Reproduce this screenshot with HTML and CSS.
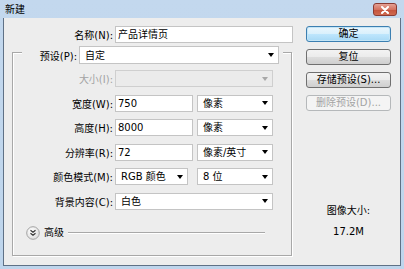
FILE: index.html
```html
<!DOCTYPE html>
<html lang="zh-CN">
<head>
  <meta charset="UTF-8" />
  <title>新建</title>
  <link rel="stylesheet" href="styles.css">
</head>
<body>
  <div class="window">
    <div class="titlebar">
      <span class="title">新建</span>
      <span class="close">
        <svg width="10" height="8" viewBox="0 0 10 8"><path d="M2 1 L8 7 M8 1 L2 7" stroke="#fff" stroke-width="2" stroke-linecap="round"/></svg>
      </span>
    </div>

    <div class="client">
      <div class="main">
        <div class="name-row">
          <span class="label name-label">名称(N):</span>
          <div class="field name-field">产品详情页</div>
        </div>

        <div class="group">
          <!-- preset sits on the top border like a legend -->
          <div class="preset-row">
            <span class="label preset-label">预设(P):</span>
            <div class="combo preset-combo"><span>自定</span><span class="arrow"></span></div>
          </div>

          <div class="rows">
            <div class="row">
              <span class="label disabled">大小(I):</span>
              <div class="combo wide off"><span></span><span class="arrow"></span></div>
            </div>
            <div class="row">
              <span class="label">宽度(W):</span>
              <div class="field num">750</div>
              <div class="combo unit"><span>像素</span><span class="arrow"></span></div>
            </div>
            <div class="row">
              <span class="label">高度(H):</span>
              <div class="field num">8000</div>
              <div class="combo unit"><span>像素</span><span class="arrow"></span></div>
            </div>
            <div class="row">
              <span class="label">分辨率(R):</span>
              <div class="field num">72</div>
              <div class="combo unit"><span>像素/英寸</span><span class="arrow"></span></div>
            </div>
            <div class="row">
              <span class="label">颜色模式(M):</span>
              <div class="combo mode"><span>RGB 颜色</span><span class="arrow"></span></div>
              <div class="combo unit bits"><span>8 位</span><span class="arrow"></span></div>
            </div>
            <div class="row">
              <span class="label">背景内容(C):</span>
              <div class="combo wide"><span>白色</span><span class="arrow"></span></div>
            </div>
          </div>

          <div class="advanced">
            <svg class="adv-icon" width="14" height="14" viewBox="0 0 14 14">
              <defs>
                <radialGradient id="knob" cx="0.4" cy="0.35" r="0.7">
                  <stop offset="0" stop-color="#ffffff"/>
                  <stop offset="1" stop-color="#dcdcdc"/>
                </radialGradient>
              </defs>
              <circle cx="7" cy="7" r="6.3" fill="url(#knob)" stroke="#a3a3a3"/>
              <path d="M4.5 4.3 L7 6.3 L9.5 4.3 M4.5 7.3 L7 9.3 L9.5 7.3" fill="none" stroke="#333" stroke-width="1.2"/>
            </svg>
            <span class="adv-text">高级</span>
            <span class="adv-line"></span>
          </div>
        </div>
      </div>

      <div class="side">
        <div class="btn default">确定</div>
        <div class="btn">复位</div>
        <div class="btn">存储预设(S)...</div>
        <div class="btn disabled">删除预设(D)...</div>

        <div class="info">
          <div>图像大小:</div>
          <div class="size">17.2M</div>
        </div>
      </div>
    </div>
  </div>
</body>
</html>
```

FILE: styles.css
```css
body {
  margin: 0;
  font-family: "DejaVu Sans", "Noto Sans CJK SC", sans-serif;
  font-size: 10px;
  color: #000;
}

.window {
  width: 404px;
  height: 269px;
  box-sizing: border-box;
  padding: 0 3px 3px;
  background: linear-gradient(#c3d8ee, #bed5ec);
  display: flex;
  flex-direction: column;
}

.titlebar {
  height: 18px;
  flex: none;
  display: flex;
  align-items: center;
  justify-content: space-between;
  padding: 0 4px 0 2px;
}

.title {
  line-height: 14px;
  margin-top: 1px;
}

.close {
  width: 24px;
  height: 13px;
  box-sizing: border-box;
  margin-top: 1px;
  border: 1px solid #8a3b33;
  border-radius: 3px;
  background: linear-gradient(#e4a195, #d4725f 50%, #c4513b 51%, #cf6a4f);
  display: flex;
  align-items: center;
  justify-content: center;
}

.client {
  flex: 1;
  display: flex;
  background: #ededed;
  border: 1px solid #5f7186;
  border-top: none;
}

.main {
  width: 290px;
  flex: none;
}

.label {
  text-align: right;
  white-space: nowrap;
  flex: none;
}

.label.disabled {
  color: #a3a3a3;
}

.name-row {
  margin-top: 8px;
  display: flex;
  align-items: center;
  gap: 2px;
}

.name-label {
  width: 109px;
}

.field,
.combo {
  height: 17px;
  box-sizing: border-box;
  border: 1px solid #c4c4c4;
  background: #fff;
  line-height: 15px;
  white-space: nowrap;
  flex: none;
}

.field {
  padding: 0 2px;
}

.combo {
  display: flex;
  align-items: center;
  justify-content: space-between;
  padding: 0 4px 0 5px;
}

.combo.off {
  background: #ebebeb;
  border-color: #cfcfcf;
}

.arrow {
  width: 0;
  height: 0;
  border-left: 3.5px solid transparent;
  border-right: 3.5px solid transparent;
  border-top: 4px solid #000;
}

.off .arrow {
  border-top-color: #a8a8a8;
}

.name-field {
  width: 178px;
}

.group {
  margin: 9px 0 0 8px;
  width: 280px;
  height: 204px;
  box-sizing: border-box;
  border: 1px solid #a8a8a8;
  box-shadow: 1px 1px 0 #fff, inset 1px 1px 0 #fff;
}

.preset-row {
  margin: -7px 0 0 9px;
  width: 261px;
  box-sizing: border-box;
  padding-right: 4px;
  background: #ededed;
  display: flex;
  align-items: center;
  gap: 2px;
}

.preset-label {
  width: 55px;
}

.preset-combo {
  width: 200px;
  height: 18px;
}

.rows {
  margin-top: 6px;
  display: flex;
  flex-direction: column;
  gap: 7.5px;
}

.row {
  display: flex;
  align-items: center;
}

.row .label {
  width: 100px;
  margin-right: 2px;
}

.combo.wide {
  width: 158px;
}

.field.num {
  width: 78px;
}

.combo.unit {
  width: 76px;
  margin-left: 4px;
}

.combo.mode {
  width: 73px;
}

.combo.bits {
  margin-left: 9px;
}

.advanced {
  margin: 16px 0 0 13px;
  display: flex;
  align-items: center;
}

.adv-text {
  margin-left: 4px;
  line-height: 14px;
}

.adv-line {
  margin-left: 4px;
  width: 197px;
  height: 1px;
  background: #a8a8a8;
  box-shadow: 0 1px 0 #fff;
}

.side {
  width: 85px;
  margin-left: 12px;
  padding-top: 8px;
  display: flex;
  flex-direction: column;
  gap: 7px;
}

.btn {
  height: 16px;
  box-sizing: border-box;
  border: 1px solid #707070;
  border-radius: 3px;
  background: linear-gradient(#f3f3f3, #ebebeb 50%, #dddddd 51%, #cfcfcf);
  text-align: center;
  line-height: 14px;
  white-space: nowrap;
}

.btn.default {
  border-color: #3c7fb1;
  background: linear-gradient(#eaf6fd, #d9f0fc 50%, #bee6fd 51%, #a7d9f5);
  box-shadow: inset 0 0 0 1px #c4e5f6;
}

.btn.disabled {
  border-color: #b5b8ba;
  background: #f4f4f4;
  color: #a3a3a3;
}

.info {
  margin-top: 86px;
  text-align: center;
  line-height: 14px;
}

.info .size {
  margin-top: 7px;
}
```
